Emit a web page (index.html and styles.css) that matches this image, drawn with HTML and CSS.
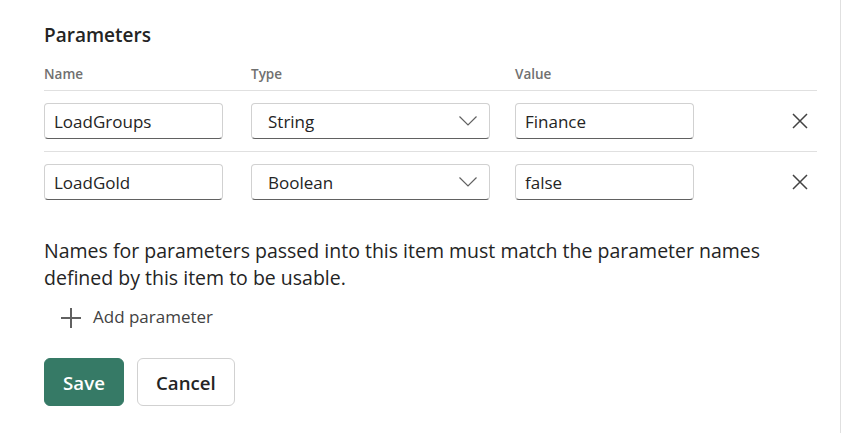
FILE: index.html
```html
<!DOCTYPE html>
<html lang="en">
<head>
  <meta charset="UTF-8">
  <meta name="viewport" content="width=device-width, initial-scale=1.0">
  <title>Parameters</title>
  <link rel="stylesheet" href="styles.css">
</head>
<body>

  <div class="panel">
    <h2 class="title">Parameters</h2>

    <div class="param-grid param-head">
      <span>Name</span>
      <span>Type</span>
      <span>Value</span>
    </div>

    <div class="param-grid param-row">
      <input class="field name-field" type="text" value="LoadGroups">
      <div class="field select-field">
        <span>String</span>
        <svg class="chevron" width="20" height="12" viewBox="0 0 20 12"><path d="M1.5 1.5 L10 10 L18.5 1.5" fill="none" stroke="#616161" stroke-width="1.2"/></svg>
      </div>
      <input class="field value-field" type="text" value="Finance">
      <button class="remove" title="Remove">
        <svg width="16" height="16" viewBox="0 0 16 16"><path d="M1 1 L15 15 M15 1 L1 15" stroke="#424242" stroke-width="1.5"/></svg>
      </button>
    </div>

    <div class="param-grid param-row last">
      <input class="field name-field" type="text" value="LoadGold">
      <div class="field select-field">
        <span>Boolean</span>
        <svg class="chevron" width="20" height="12" viewBox="0 0 20 12"><path d="M1.5 1.5 L10 10 L18.5 1.5" fill="none" stroke="#616161" stroke-width="1.2"/></svg>
      </div>
      <input class="field value-field" type="text" value="false">
      <button class="remove" title="Remove">
        <svg width="16" height="16" viewBox="0 0 16 16"><path d="M1 1 L15 15 M15 1 L1 15" stroke="#424242" stroke-width="1.5"/></svg>
      </button>
    </div>

    <p class="hint">Names for parameters passed into this item must match the parameter names defined by this item to be usable.</p>

    <button class="add-param">
      <svg width="22" height="20" viewBox="0 0 22 20"><path d="M11 0 L11 20 M1 10 L21 10" stroke="#616161" stroke-width="2"/></svg>
      <span>Add parameter</span>
    </button>

    <div class="actions">
      <button class="btn btn-primary">Save</button>
      <button class="btn">Cancel</button>
    </div>
  </div>

</body>
</html>
```

FILE: styles.css
```css
body {
  margin: 0;
  background-color: #fff;
  font-family: 'Open Sans', 'Noto Sans', sans-serif;
  color: #242424;
}

.panel {
  width: 841px;
  height: 433px;
  box-sizing: border-box;
  border-right: 1px solid #e0e0e0;
  padding: 22px 23px 0 44px;
}

.title {
  margin: 0;
  font-size: 19px;
  line-height: 26px;
  font-weight: 600;
  color: #242424;
}

.param-grid {
  display: grid;
  grid-template-columns: 207px 264px 179px 1fr;
  align-items: center;
  border-bottom: 1px solid #e0e0e0;
}

.param-head {
  margin-top: 17px;
  padding-bottom: 7px;
  font-size: 13.5px;
  line-height: 18px;
  font-weight: 600;
  color: #707070;
}

.param-row {
  padding: 12px 0;
}

.param-row.last {
  border-bottom: none;
}

.field {
  height: 36px;
  box-sizing: border-box;
  border: 1px solid #d1d1d1;
  border-bottom-color: #616161;
  border-radius: 4px;
  background-color: #fff;
  font-family: inherit;
  font-size: 17px;
  color: #242424;
  padding: 0 9px;
  outline: none;
}

.name-field,
.value-field {
  width: 179px;
}

.select-field {
  width: 239px;
  display: flex;
  align-items: center;
  justify-content: space-between;
  padding: 0 11px 0 16px;
}

.chevron {
  display: block;
}

.remove {
  justify-self: end;
  margin-right: 9px;
  background: none;
  border: none;
  padding: 0;
  width: 16px;
  height: 16px;
  cursor: pointer;
}

.remove svg {
  display: block;
}

.hint {
  margin: 25px 0 0;
  font-size: 19.5px;
  line-height: 27px;
  color: #242424;
  width: 773px;
}

.add-param {
  margin-top: 7px;
  height: 36px;
  display: flex;
  align-items: center;
  gap: 11px;
  background: none;
  border: none;
  padding: 0 0 0 16px;
  font-family: inherit;
  font-size: 17px;
  color: #424242;
  cursor: pointer;
}

.add-param svg {
  margin-top: 3px;
}

.actions {
  margin-top: 24px;
  display: flex;
  gap: 13px;
}

.btn {
  height: 48px;
  min-width: 80px;
  padding: 0 18px;
  box-sizing: border-box;
  border: 1px solid #d1d1d1;
  border-radius: 6px;
  background-color: #fff;
  font-family: inherit;
  font-size: 18.67px;
  font-weight: 600;
  color: #242424;
  cursor: pointer;
}

.btn-primary {
  background-color: #367a66;
  border-color: #367a66;
  color: #fff;
}
```
